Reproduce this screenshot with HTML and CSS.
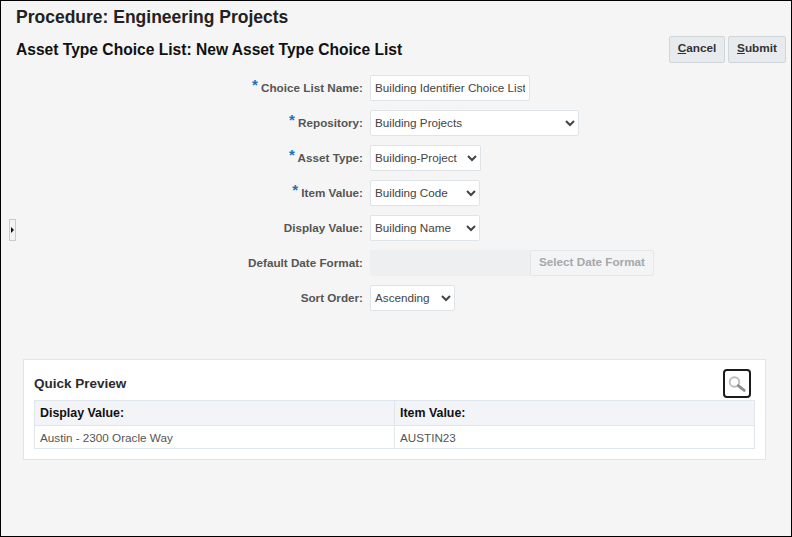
FILE: index.html
```html
<!DOCTYPE html>
<html lang="en">
<head>
<meta charset="utf-8">
<title>Asset Type Choice List</title>
<link rel="stylesheet" href="styles.css">
</head>
<body>
<main class="page">
  <button class="toggle" type="button" aria-label="Expand"><span class="toggle-arrow"></span></button>
  <h1 class="title">Procedure: Engineering Projects</h1>
  <div class="head-row">
    <h2 class="subtitle">Asset Type Choice List: New Asset Type Choice List</h2>
    <div class="actions">
      <button class="btn btn-cancel" type="button"><u>C</u>ancel</button>
      <button class="btn btn-submit" type="button"><u>S</u>ubmit</button>
    </div>
  </div>
  <form class="form">
    <label class="label"><span class="req">*</span> Choice List Name:</label>
    <div class="control"><input class="input" type="text" value="Building Identifier Choice List"></div>

    <label class="label"><span class="req">*</span> Repository:</label>
    <div class="control"><select class="select w-repo"><option>Building Projects</option></select></div>

    <label class="label"><span class="req">*</span> Asset Type:</label>
    <div class="control"><select class="select w-type"><option>Building-Project</option></select></div>

    <label class="label"><span class="req">*</span> Item Value:</label>
    <div class="control"><select class="select w-val"><option>Building Code</option></select></div>

    <label class="label">Display Value:</label>
    <div class="control"><select class="select w-val"><option>Building Name</option></select></div>

    <label class="label">Default Date Format:</label>
    <div class="control date"><div class="date-field"></div><button class="date-btn" type="button" disabled>Select Date Format</button></div>

    <label class="label">Sort Order:</label>
    <div class="control"><select class="select w-sort"><option>Ascending</option></select></div>
  </form>
  <section class="card">
    <div class="card-head">
      <h3 class="card-title">Quick Preview</h3>
      <button class="search" type="button" aria-label="Search">
        <svg width="20" height="20" viewBox="0 0 20 20" fill="none">
          <circle cx="7.5" cy="8" r="4.8" stroke="#bdbdbd" stroke-width="1.9"/>
          <path d="M11.2 11.6 L17.2 16.4" stroke="#8f8f8f" stroke-width="2.8" stroke-linecap="round"/>
        </svg>
      </button>
    </div>
    <table class="table">
      <thead><tr><th class="col-a">Display Value:</th><th>Item Value:</th></tr></thead>
      <tbody><tr><td>Austin - 2300 Oracle Way</td><td>AUSTIN23</td></tr></tbody>
    </table>
  </section>
</main>
</body>
</html>
```
FILE: styles.css
```css
* { box-sizing: border-box; }
html, body { margin: 0; height: 100%; }
body { font-family: "Liberation Sans", Arial, sans-serif; color: #333; }
.page {
  position: relative;
  width: 792px;
  height: 537px;
  background: #f5f5f5;
  border: 1px solid #000;
  padding: 6px 5px 0 15px;
  overflow: hidden;
}
.title { margin: 0; font-size: 17.5px; line-height: 20px; font-weight: 700; color: #222; }
.head-row { display: flex; justify-content: space-between; align-items: flex-start; margin-top: 9px; height: 39px; }
.subtitle { margin: 0; padding-top: 4px; font-size: 15.6px; line-height: 20px; font-weight: 700; color: #111; }
.actions { display: flex; gap: 3px; }
.btn {
  height: 27px;
  padding: 0 0 3px;
  font: 700 11.8px "Liberation Sans", Arial, sans-serif;
  color: #333;
  background: #e8ebee;
  border: 1px solid #cfd5da;
  border-radius: 2px;
}
.btn-cancel { width: 56px; }
.btn-submit { width: 58px; }
.form {
  display: grid;
  grid-template-columns: 347px auto;
  justify-content: start;
  column-gap: 7px;
  row-gap: 9px;
  align-items: center;
}
.label { padding-bottom: 2px; font-size: 11.7px; font-weight: 700; color: #555; text-align: right; }
.req { font-size: 15px; line-height: 10px; color: #1a72bb; vertical-align: 2px; }
.control { height: 26px; display: flex; }
.input, .select {
  height: 26px;
  font: 11.7px "Liberation Sans", Arial, sans-serif;
  color: #444;
  background: #fff;
  border: 1px solid #dfe4e8;
  border-radius: 2px;
}
.input { width: 160px; padding: 0 4px 2px; }
.select { padding: 0 0 2px; }
.w-repo { width: 209px; }
.w-type { width: 111px; }
.w-val { width: 110px; }
.w-sort { width: 85px; }
.date-field { width: 160px; background: #eeeff1; border-radius: 2px 0 0 2px; }
.date-btn {
  width: 124px;
  padding: 0 0 4px;
  font: 700 11.7px "Liberation Sans", Arial, sans-serif;
  color: #a6a8aa;
  background: #f3f4f5;
  border: 1px solid #e4e6e8;
  border-radius: 0 2px 2px 0;
}
.toggle {
  position: absolute;
  left: 8px;
  top: 218px;
  width: 7px;
  height: 22px;
  padding: 0;
  display: flex;
  align-items: center;
  justify-content: center;
  background: #f2f3f4;
  border: 1px solid #c6ccd1;
}
.toggle-arrow { width: 0; height: 0; border-left: 3px solid #111; border-top: 3px solid transparent; border-bottom: 3px solid transparent; }
.card {
  width: 743px;
  height: 101px;
  margin: 48px 0 0 7px;
  padding: 9px 10px 0;
  background: #fff;
  border: 1px solid #dfe6ea;
}
.card-head { display: flex; justify-content: space-between; align-items: flex-start; height: 31px; padding-right: 4px; }
.card-title { margin: 7px 0 0; font-size: 13.5px; line-height: 16px; font-weight: 700; color: #2b2b2b; }
.search {
  width: 28px;
  height: 29px;
  padding: 0;
  display: flex;
  align-items: center;
  justify-content: center;
  background: #fff;
  border: 2px solid #1b1b1b;
  border-radius: 4px;
}
.table { width: 721px; border-collapse: collapse; table-layout: fixed; font-size: 11.7px; }
.table th, .table td { border: 1px solid #dfe6ee; padding: 0 5px; text-align: left; }
.table th { height: 25px; font-size: 12.4px; font-weight: 700; color: #111; background: #f2f4f7; }
.table td { height: 23px; color: #555; }
.col-a { width: 360px; }
```
